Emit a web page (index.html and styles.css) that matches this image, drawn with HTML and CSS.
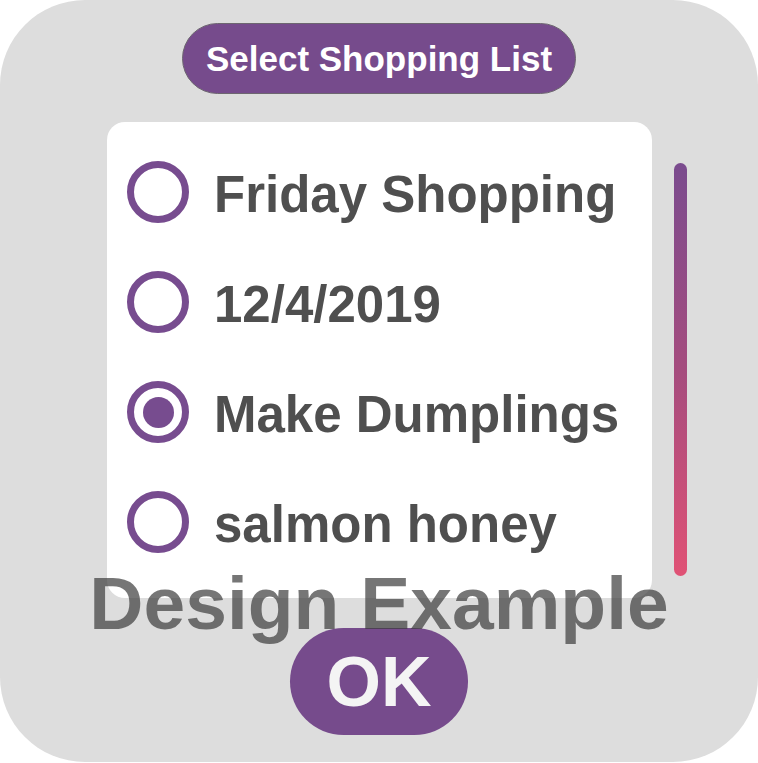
FILE: index.html
```html
<!DOCTYPE html>
<html>
<head>
<meta charset="utf-8">
<link rel="stylesheet" href="styles.css">
</head>
<body>
<div class="frame">
  <div class="title">Select Shopping List</div>
  <div class="content">
    <div class="card">
      <div class="item"><span class="radio"></span><span class="label">Friday Shopping</span></div>
      <div class="item"><span class="radio"></span><span class="label">12/4/2019</span></div>
      <div class="item"><span class="radio checked"></span><span class="label">Make Dumplings</span></div>
      <div class="item"><span class="radio"></span><span class="label">salmon honey</span></div>
    </div>
    <div class="scrollbar"></div>
  </div>
  <div class="ok">OK</div>
  <div class="watermark">Design Example</div>
</div>
</body>
</html>
```
FILE: styles.css
```css
html, body {
  margin: 0;
  padding: 0;
  background: #ffffff;
}
body {
  width: 758px;
  height: 763px;
  overflow: hidden;
  font-family: "Liberation Sans", Arial, sans-serif;
}
.frame {
  position: relative;
  width: 758px;
  height: 762px;
  background: #dddddd;
  border-radius: 85px;
  display: flex;
  flex-direction: column;
  align-items: center;
}
.title {
  margin-top: 23px;
  box-sizing: border-box;
  width: 394px;
  height: 71px;
  border-radius: 36px;
  background: #764b8c;
  border: 1px solid #6d6670;
  color: #ffffff;
  font-weight: bold;
  font-size: 35px;
  display: flex;
  align-items: center;
  justify-content: center;
}
.content {
  align-self: stretch;
  margin-top: 28px;
  padding-left: 107px;
  display: flex;
  align-items: flex-start;
}
.card {
  box-sizing: border-box;
  width: 545px;
  height: 476px;
  background: #ffffff;
  border-radius: 18px;
  padding: 15px 0 0 20px;
  display: flex;
  flex-direction: column;
}
.item {
  height: 110px;
  display: flex;
  align-items: center;
}
.radio {
  box-sizing: border-box;
  width: 62px;
  height: 62px;
  border: 7px solid #774c8f;
  border-radius: 50%;
  display: flex;
  align-items: center;
  justify-content: center;
  flex: none;
}
.radio.checked::after {
  content: "";
  width: 31px;
  height: 31px;
  border-radius: 50%;
  background: #774c8f;
}
.label {
  margin-left: 25px;
  padding-top: 5px;
  color: #4f4f4f;
  font-weight: bold;
  font-size: 51px;
  line-height: 1;
}
.scrollbar {
  margin-left: 22px;
  margin-top: 41px;
  width: 13px;
  height: 413px;
  border-radius: 7px;
  background: linear-gradient(to bottom, #7a4b8e, #a54c7e 50%, #e05275);
}
.ok {
  margin-top: 30px;
  width: 178px;
  height: 107px;
  border-radius: 54px;
  background: #764b8c;
  color: #f4f4f4;
  font-weight: bold;
  font-size: 70px;
  display: flex;
  align-items: center;
  justify-content: center;
}
.watermark {
  position: absolute;
  left: 0;
  right: 0;
  top: 566px;
  text-align: center;
  font-weight: bold;
  font-size: 75px;
  line-height: 75px;
  color: rgba(60, 60, 60, 0.7);
  pointer-events: none;
}
```
